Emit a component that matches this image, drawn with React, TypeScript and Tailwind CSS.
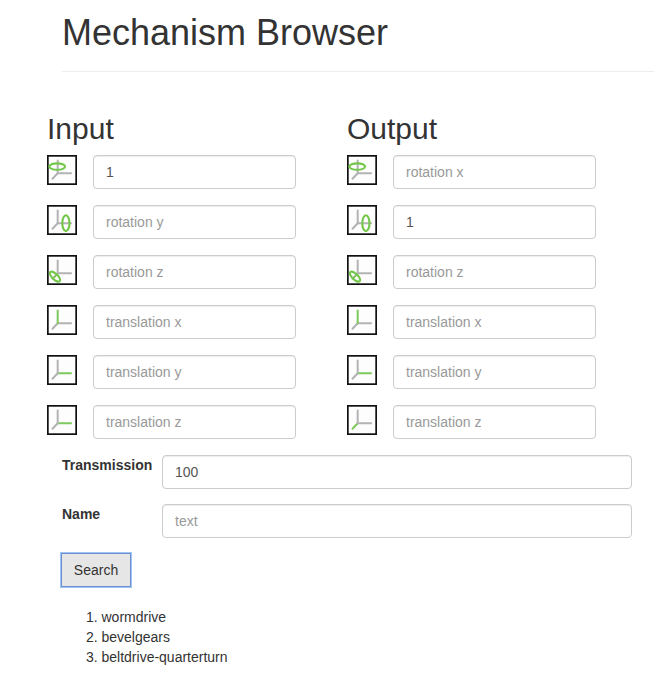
type Axis = 'rx' | 'ry' | 'rz' | 'tx' | 'ty' | 'tz';

const GRAY = '#b3b3b5';
const GREEN = '#7cc95c';

function AxisIcon({ active }: { active: Axis }) {
  return (
    <svg width="30" height="30" viewBox="0 0 30 30" fill="none" className="block shrink-0" aria-hidden="true">
      <rect x="0.85" y="0.85" width="28.3" height="28.3" fill="#fdfdfd" stroke="#111" strokeWidth="1.7" />
      <g strokeWidth="2" strokeLinecap="round">
        <path d="M10.7 18.2L5.5 23.8" stroke={active === 'tz' ? GREEN : GRAY} />
        <path d="M10.7 18.2H24" stroke={active === 'ty' ? GREEN : GRAY} />
        <path d="M10.7 18.2V5.6" stroke={active === 'tx' ? GREEN : GRAY} />
      </g>
      <g stroke="#72c748" strokeWidth="2.1">
        {active === 'rx' && <ellipse cx="10.2" cy="11.6" rx="7.9" ry="3.2" />}
        {active === 'ry' && <ellipse cx="18.9" cy="18.2" rx="3.6" ry="7.9" />}
        {active === 'rz' && (
          <>
            <ellipse cx="8" cy="21.6" rx="6.6" ry="2.8" transform="rotate(43 8 21.6)" />
            <path d="M6 23.6L10 19.5" strokeWidth="1.2" />
          </>
        )}
      </g>
    </svg>
  );
}

const fieldClass =
  'block h-[34px] rounded-[4px] border border-[#ccc] bg-white px-3 py-1.5 text-[14px] leading-5 text-[#555] shadow-[inset_0_1px_1px_rgba(0,0,0,0.075)] outline-none placeholder:text-[#999]';

function AxisField({ axis, label, value, icon }: { axis: Axis; label: string; value?: string; icon?: Axis }) {
  return (
    <div className="flex h-[34px] gap-4">
      <AxisIcon active={icon ?? axis} />
      <input className={`${fieldClass} w-[203px]`} placeholder={label} defaultValue={value} />
    </div>
  );
}

export default function App() {
  return (
    <main className="h-[699px] w-full overflow-hidden bg-white pt-[13px] font-['Liberation_Sans',Arial,sans-serif] text-[14px] leading-5 text-[#333]">
      <header className="ml-[62px] h-[59px] border-b border-[#eee]">
        <h1 className="text-[36px] leading-[39.6px] font-normal">Mechanism Browser</h1>
      </header>

      <div className="mt-10 ml-[47px] flex gap-[51px]">
        <section className="w-[249px]">
          <h2 className="mb-2.5 text-[30px] leading-[33px] font-normal">Input</h2>
          <div className="flex flex-col gap-4">
            <AxisField axis="rx" label="rotation x" value="1" />
            <AxisField axis="ry" label="rotation y" />
            <AxisField axis="rz" label="rotation z" />
            <AxisField axis="tx" label="translation x" />
            <AxisField axis="ty" label="translation y" />
            <AxisField axis="tz" label="translation z" icon="ty" />
          </div>
        </section>
        <section className="w-[249px]">
          <h2 className="mb-2.5 text-[30px] leading-[33px] font-normal">Output</h2>
          <div className="flex flex-col gap-4">
            <AxisField axis="rx" label="rotation x" />
            <AxisField axis="ry" label="rotation y" value="1" />
            <AxisField axis="rz" label="rotation z" />
            <AxisField axis="tx" label="translation x" />
            <AxisField axis="ty" label="translation y" />
            <AxisField axis="tz" label="translation z" />
          </div>
        </section>
      </div>

      <div className="mt-4 ml-[62px] flex flex-col gap-[15px]">
        <div className="flex">
          <label htmlFor="transmission" className="w-[100px] font-bold">Transmission</label>
          <input id="transmission" className={`${fieldClass} w-[470px]`} defaultValue="100" />
        </div>
        <div className="flex">
          <label htmlFor="name" className="w-[100px] font-bold">Name</label>
          <input id="name" className={`${fieldClass} w-[470px]`} placeholder="text" />
        </div>
      </div>

      <button className="mt-[15px] ml-[61px] block h-[34px] w-[70px] border border-[#6c8fd0] bg-[#e6e6e6] text-center text-[14px] leading-5 text-[#333] shadow-[0_0_0_1px_#a3c2f5]">
        Search
      </button>

      <ol className="mt-5 ml-[61.5px] list-decimal pl-10">
        <li>wormdrive</li>
        <li>bevelgears</li>
        <li>beltdrive-quarterturn</li>
      </ol>
    </main>
  );
}
